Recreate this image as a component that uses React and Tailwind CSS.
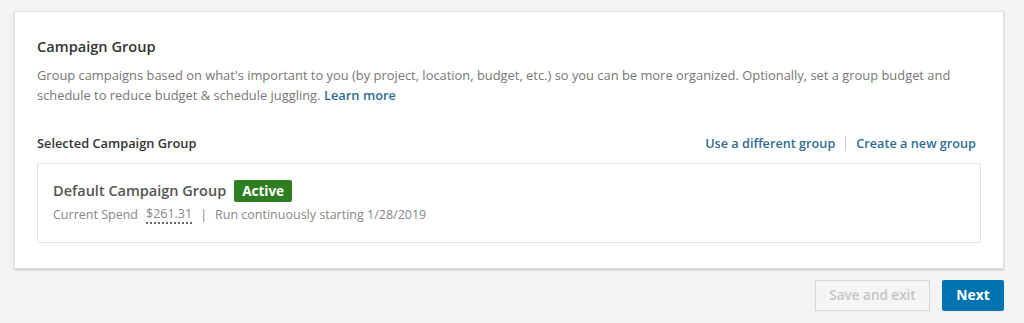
export default function App() {
  return (
    <div className="w-[1024px] h-[323px] bg-[#f3f3f3] pt-[11px] px-[14px] overflow-hidden" style={{ fontFamily: '"Open Sans", "Noto Sans", sans-serif' }}>
      <div className="w-[990px] h-[258px] bg-white border border-[#e2e2e2] shadow-[0_1px_2px_rgba(0,0,0,0.2)] pt-[24px] px-[22px]">
        <h2 className="text-[14.6px] font-semibold text-[#333] leading-[20px]">Campaign Group</h2>
        <p className="mt-[9px] text-[12.9px] leading-[20px] text-[#777] w-[925px]">
          Group campaigns based on what's important to you (by project, location, budget, etc.) so you can be more organized. Optionally, set a group budget and schedule to reduce budget &amp; schedule juggling.{' '}
          <span className="font-semibold text-[#2f6d95]">Learn more</span>
        </p>
        <div className="mt-[29px] flex items-center justify-between pr-[5px] h-[20px]">
          <span className="text-[12.8px] font-semibold text-[#333]">Selected Campaign Group</span>
          <div className="flex items-center text-[12.7px] font-semibold text-[#2f6d95]">
            <span>Use a different group</span>
            <span className="mx-[10px] w-px h-[15px] bg-[#cfcfcf]"></span>
            <span>Create a new group</span>
          </div>
        </div>
        <div className="mt-[9px] border border-[#e3e3e3] rounded-[2px] h-[80px] pl-[15px] pt-[15px]">
          <div className="flex items-center h-[23px]">
            <span className="text-[14.5px] font-semibold text-[#555]">Default Campaign Group</span>
            <span className="ml-[8px] bg-[#2e7d20] text-white text-[13.5px] font-bold px-[8px] h-[22px] leading-[22px] rounded-[2px]">Active</span>
          </div>
          <div className="mt-[3px] text-[12.5px] text-[#888] flex items-center leading-[18px]">
            <span>Current Spend</span>
            <span className="ml-[8px] border-b-2 border-dotted border-[#666] text-[#888] leading-[17px]">$261.31</span>
            <span className="mx-[8px]">|</span>
            <span>Run continuously starting 1/28/2019</span>
          </div>
        </div>
      </div>
      <div className="flex justify-end gap-[12px] mt-[11px] pr-[6px]">
        <button className="w-[115px] h-[31px] border border-[#d6d6d6] bg-[#f5f5f5] text-[#c4c4c4] text-[13.5px] font-semibold">Save and exit</button>
        <button className="w-[62px] h-[31px] bg-[#0073b1] text-white text-[13.8px] font-bold rounded-[2px]">Next</button>
      </div>
    </div>
  );
}
